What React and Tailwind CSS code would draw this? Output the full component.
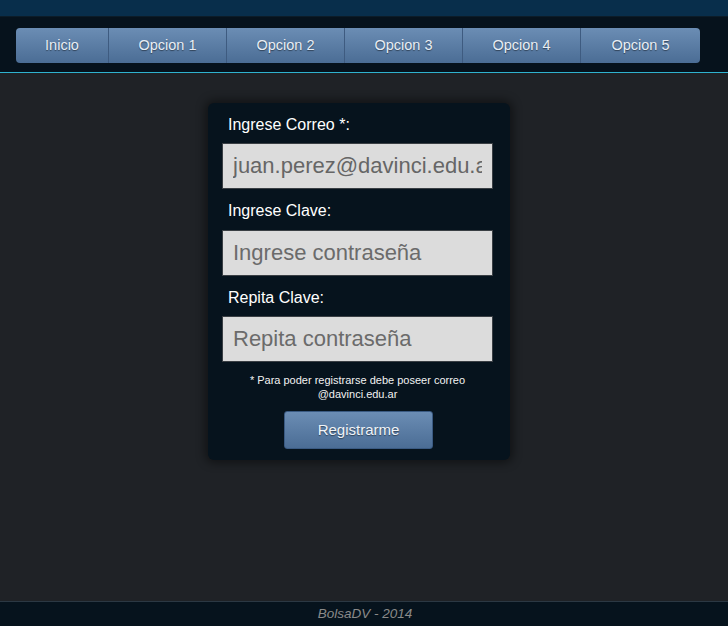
import React from "react";

const items = [
  { label: "Inicio", w: "w-[92px]" },
  { label: "Opcion 1", w: "w-[118px]" },
  { label: "Opcion 2", w: "w-[118px]" },
  { label: "Opcion 3", w: "w-[118px]" },
  { label: "Opcion 4", w: "w-[118px]" },
  { label: "Opcion 5", w: "w-[120px]" },
];

const inputCls =
  "w-[271px] h-[46px] bg-[#dcdcdc] border border-[#3a3f44] px-[10px] text-[22px] text-[#666] placeholder:text-[#6b6b6b] outline-none";

export default function App() {
  return (
    <div
      className="h-[626px] w-full flex flex-col bg-[#1f2226]"
      style={{ fontFamily: '"Liberation Sans", Arial, sans-serif' }}
    >
      <div className="h-[17px] bg-[#082e4b] border-b border-[#0c1c28]" />
      <div className="h-[56px] bg-[#06121c] border-b border-[#2fb3cf] pt-[11px] pl-4">
        <nav className="flex h-[35px] w-[684px] rounded-[4px] overflow-hidden">
          {items.map((it, i) => (
            <a
              key={it.label}
              className={`${it.w} h-full flex items-center justify-center pt-[1px] text-[14.5px] text-[#e8eef5] bg-gradient-to-b from-[#6b8db4] to-[#4b6d95] ${
                i > 0 ? "border-l border-[#3e5b80]" : ""
              } [text-shadow:0_1px_1px_rgba(0,0,0,0.45)]`}
            >
              {it.label}
            </a>
          ))}
        </nav>
      </div>
      <main className="flex-1 flex justify-center pt-[30px]">
        <div className="w-[302px] h-[357px] mr-[10px] bg-[#06131d] rounded-[6px] shadow-[0_0_10px_3px_rgba(0,0,0,0.45)] pl-[14px] pt-[13px] flex flex-col">
          <label className="pl-[6px] text-[16px] text-white leading-[18px]">Ingrese Correo *:</label>
          <input
            readOnly
            value="juan.perez@davinci.edu.ar"
            className={`mt-[9px] ${inputCls}`}
            style={{ fontFamily: '"Liberation Sans", Arial, sans-serif' }}
          />
          <label className="mt-[13px] pl-[6px] text-[16px] text-white leading-[18px]">Ingrese Clave:</label>
          <input
            readOnly
            placeholder="Ingrese contraseña"
            className={`mt-[10px] ${inputCls}`}
            style={{ fontFamily: '"Liberation Sans", Arial, sans-serif' }}
          />
          <label className="mt-[13px] pl-[6px] text-[16px] text-white leading-[18px]">Repita Clave:</label>
          <input
            readOnly
            placeholder="Repita contraseña"
            className={`mt-[9px] ${inputCls}`}
            style={{ fontFamily: '"Liberation Sans", Arial, sans-serif' }}
          />
          <p className="mt-[11px] w-[271px] text-center text-[11px] leading-[14px] text-[#f2f2f2]">
            * Para poder registrarse debe poseer correo
            <br />
            @davinci.edu.ar
          </p>
          <div className="w-[271px] flex justify-center mt-[10px]">
            <button
              className="ml-[2px] w-[149px] h-[38px] rounded-[3px] border border-[#3a5a82] bg-gradient-to-b from-[#6b8db4] to-[#4b6d95] text-[15px] text-[#f0f4f8] [text-shadow:0_1px_1px_rgba(0,0,0,0.45)]"
              style={{ fontFamily: '"Liberation Sans", Arial, sans-serif' }}
            >
              Registrarme
            </button>
          </div>
        </div>
      </main>
      <footer className="h-[25px] bg-[#06131d] border-t border-[#2b3843] flex items-center justify-center">
        <span className="italic text-[13.5px] text-[#8a8a8a] ml-[2px]">BolsaDV - 2014</span>
      </footer>
    </div>
  );
}
